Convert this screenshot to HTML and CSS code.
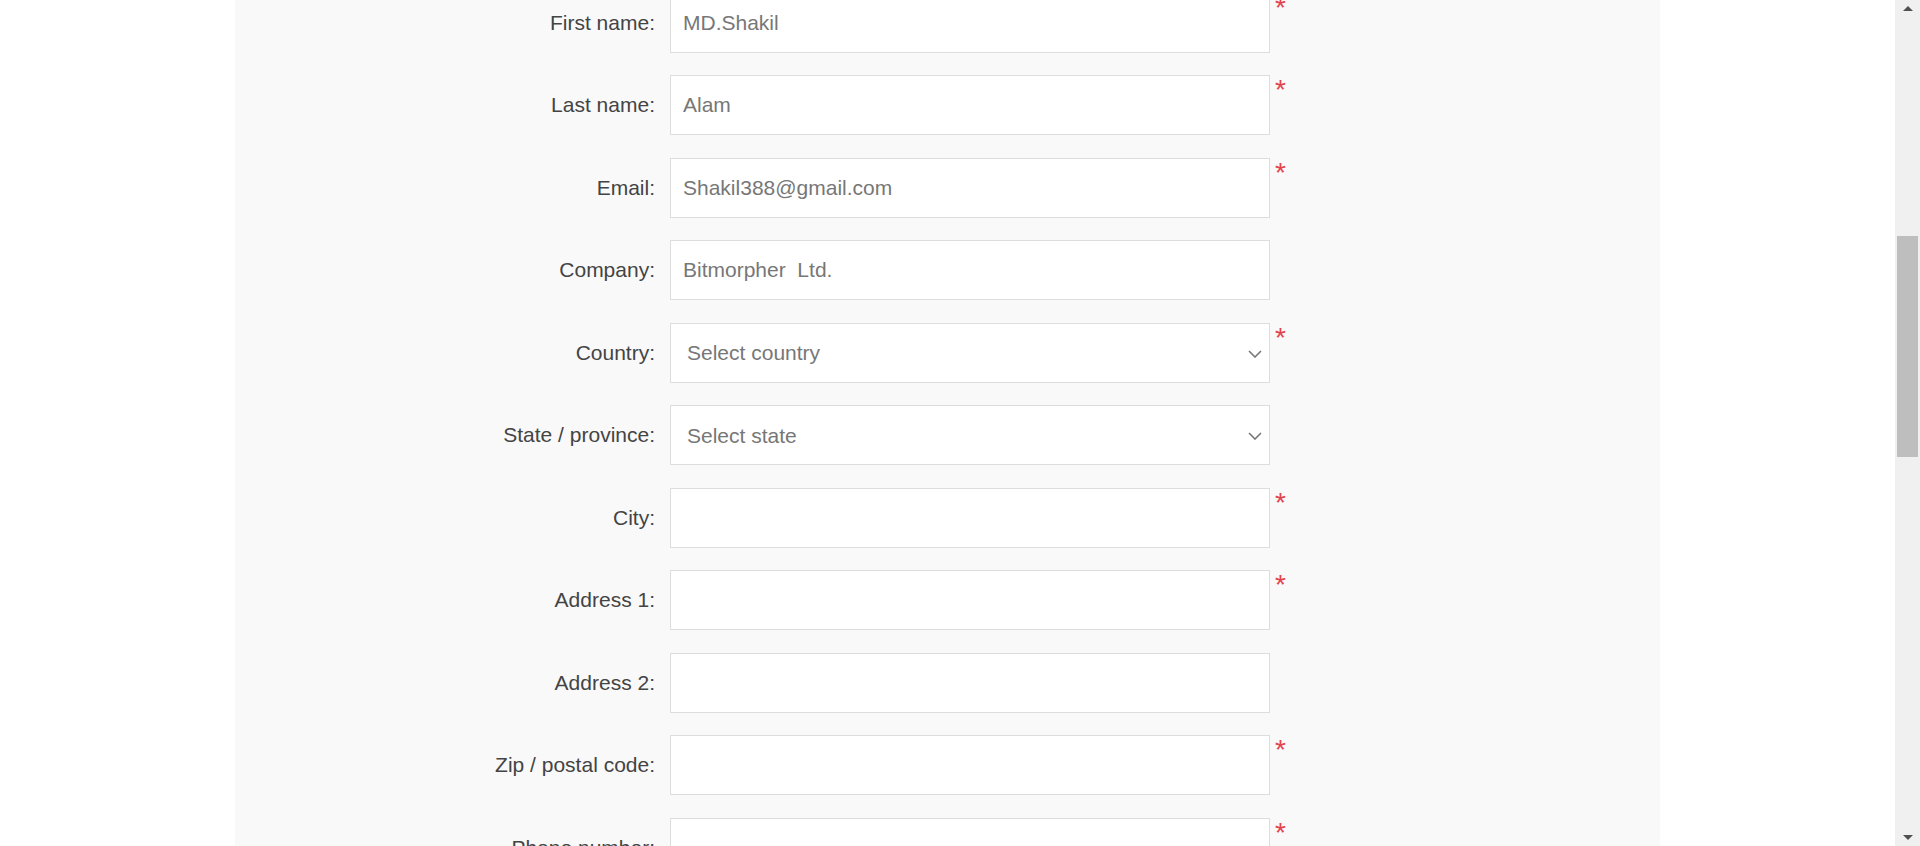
FILE: index.html
```html
<!DOCTYPE html>
<html lang="en">
<head>
<meta charset="utf-8">
<title>Register</title>
<link rel="stylesheet" href="styles.css">
</head>
<body>
<div class="viewport">
  <div class="page">
    <div class="panel">
      <form class="form-fields">
        <div class="row">
          <label class="label" for="fn">First name:</label>
          <input class="field" id="fn" type="text" value="MD.Shakil">
          <span class="required">*</span>
        </div>
        <div class="row">
          <label class="label" for="ln">Last name:</label>
          <input class="field" id="ln" type="text" value="Alam">
          <span class="required">*</span>
        </div>
        <div class="row">
          <label class="label" for="em">Email:</label>
          <input class="field" id="em" type="text" value="Shakil388@gmail.com">
          <span class="required">*</span>
        </div>
        <div class="row">
          <label class="label" for="co">Company:</label>
          <input class="field" id="co" type="text" value="Bitmorpher  Ltd.">
        </div>
        <div class="row">
          <label class="label" for="cy">Country:</label>
          <div class="select-wrap">
            <select class="field select" id="cy"><option>Select country</option></select>
            <svg class="chevron" width="14" height="8" viewBox="0 0 14 8"><path d="M1 1 L7 7 L13 1" fill="none" stroke="#777" stroke-width="1.6"/></svg>
          </div>
          <span class="required">*</span>
        </div>
        <div class="row">
          <label class="label" for="st">State / province:</label>
          <div class="select-wrap">
            <select class="field select" id="st"><option>Select state</option></select>
            <svg class="chevron" width="14" height="8" viewBox="0 0 14 8"><path d="M1 1 L7 7 L13 1" fill="none" stroke="#777" stroke-width="1.6"/></svg>
          </div>
        </div>
        <div class="row">
          <label class="label" for="ci">City:</label>
          <input class="field" id="ci" type="text">
          <span class="required">*</span>
        </div>
        <div class="row">
          <label class="label" for="a1">Address 1:</label>
          <input class="field" id="a1" type="text">
          <span class="required">*</span>
        </div>
        <div class="row">
          <label class="label" for="a2">Address 2:</label>
          <input class="field" id="a2" type="text">
        </div>
        <div class="row">
          <label class="label" for="zp">Zip / postal code:</label>
          <input class="field" id="zp" type="text">
          <span class="required">*</span>
        </div>
        <div class="row">
          <label class="label" for="ph">Phone number:</label>
          <input class="field" id="ph" type="text">
          <span class="required">*</span>
        </div>
      </form>
    </div>
  </div>
  <div class="scrollbar">
    <div class="arrow arrow-up"></div>
    <div class="track">
      <div class="thumb"></div>
    </div>
    <div class="arrow arrow-down"></div>
  </div>
</div>
</body>
</html>
```
FILE: styles.css
```css
html, body {
  margin: 0;
  padding: 0;
  height: 100%;
  overflow: hidden;
}

body {
  font-family: "Liberation Sans", Arial, sans-serif;
  background: #ffffff;
}

.viewport {
  display: flex;
  height: 846px;
  width: 1920px;
}

.page {
  flex: 1;
  background: #ffffff;
  display: flex;
  justify-content: center;
  overflow: hidden;
}

.panel {
  width: 1425px;
  height: 100%;
  background: #f9f9f9;
  overflow: hidden;
}

.form-fields {
  display: flex;
  flex-direction: column;
  gap: 22.5px;
  margin-top: -7.5px;
}

.row {
  display: flex;
  align-items: center;
  height: 60px;
}

.label {
  width: 420px;
  flex: none;
  text-align: right;
  margin-right: 15px;
  font-size: 21px;
  color: #444444;
}

.field {
  box-sizing: border-box;
  width: 600px;
  height: 60px;
  flex: none;
  margin: 0;
  border: 1px solid #dddddd;
  border-radius: 0;
  background: #ffffff;
  padding: 0 12px;
  font-family: "Liberation Sans", Arial, sans-serif;
  font-size: 21px;
  color: #777777;
  outline: none;
}

.select-wrap {
  position: relative;
  width: 600px;
  height: 60px;
  flex: none;
}

.select {
  appearance: none;
  -webkit-appearance: none;
  padding: 0 40px 0 16px;
}

.chevron {
  position: absolute;
  right: 8px;
  top: 27px;
  pointer-events: none;
}

.required {
  align-self: flex-start;
  margin-top: 1px;
  margin-left: 5px;
  font-size: 28px;
  line-height: 1;
  color: #e4434b;
}

.scrollbar {
  width: 25px;
  flex: none;
  background: #f0f0f0;
  display: flex;
  flex-direction: column;
  align-items: center;
}

.arrow {
  width: 0;
  height: 0;
  border-left: 5px solid transparent;
  border-right: 5px solid transparent;
  flex: none;
}

.arrow-up {
  margin-top: 6px;
  border-bottom: 5px solid #505050;
}

.arrow-down {
  margin-bottom: 6px;
  border-top: 5px solid #505050;
}

.track {
  flex: 1;
  width: 100%;
  display: flex;
  justify-content: center;
}

.thumb {
  width: 21px;
  height: 221px;
  margin-top: 225px;
  background: #bebebe;
}
```
